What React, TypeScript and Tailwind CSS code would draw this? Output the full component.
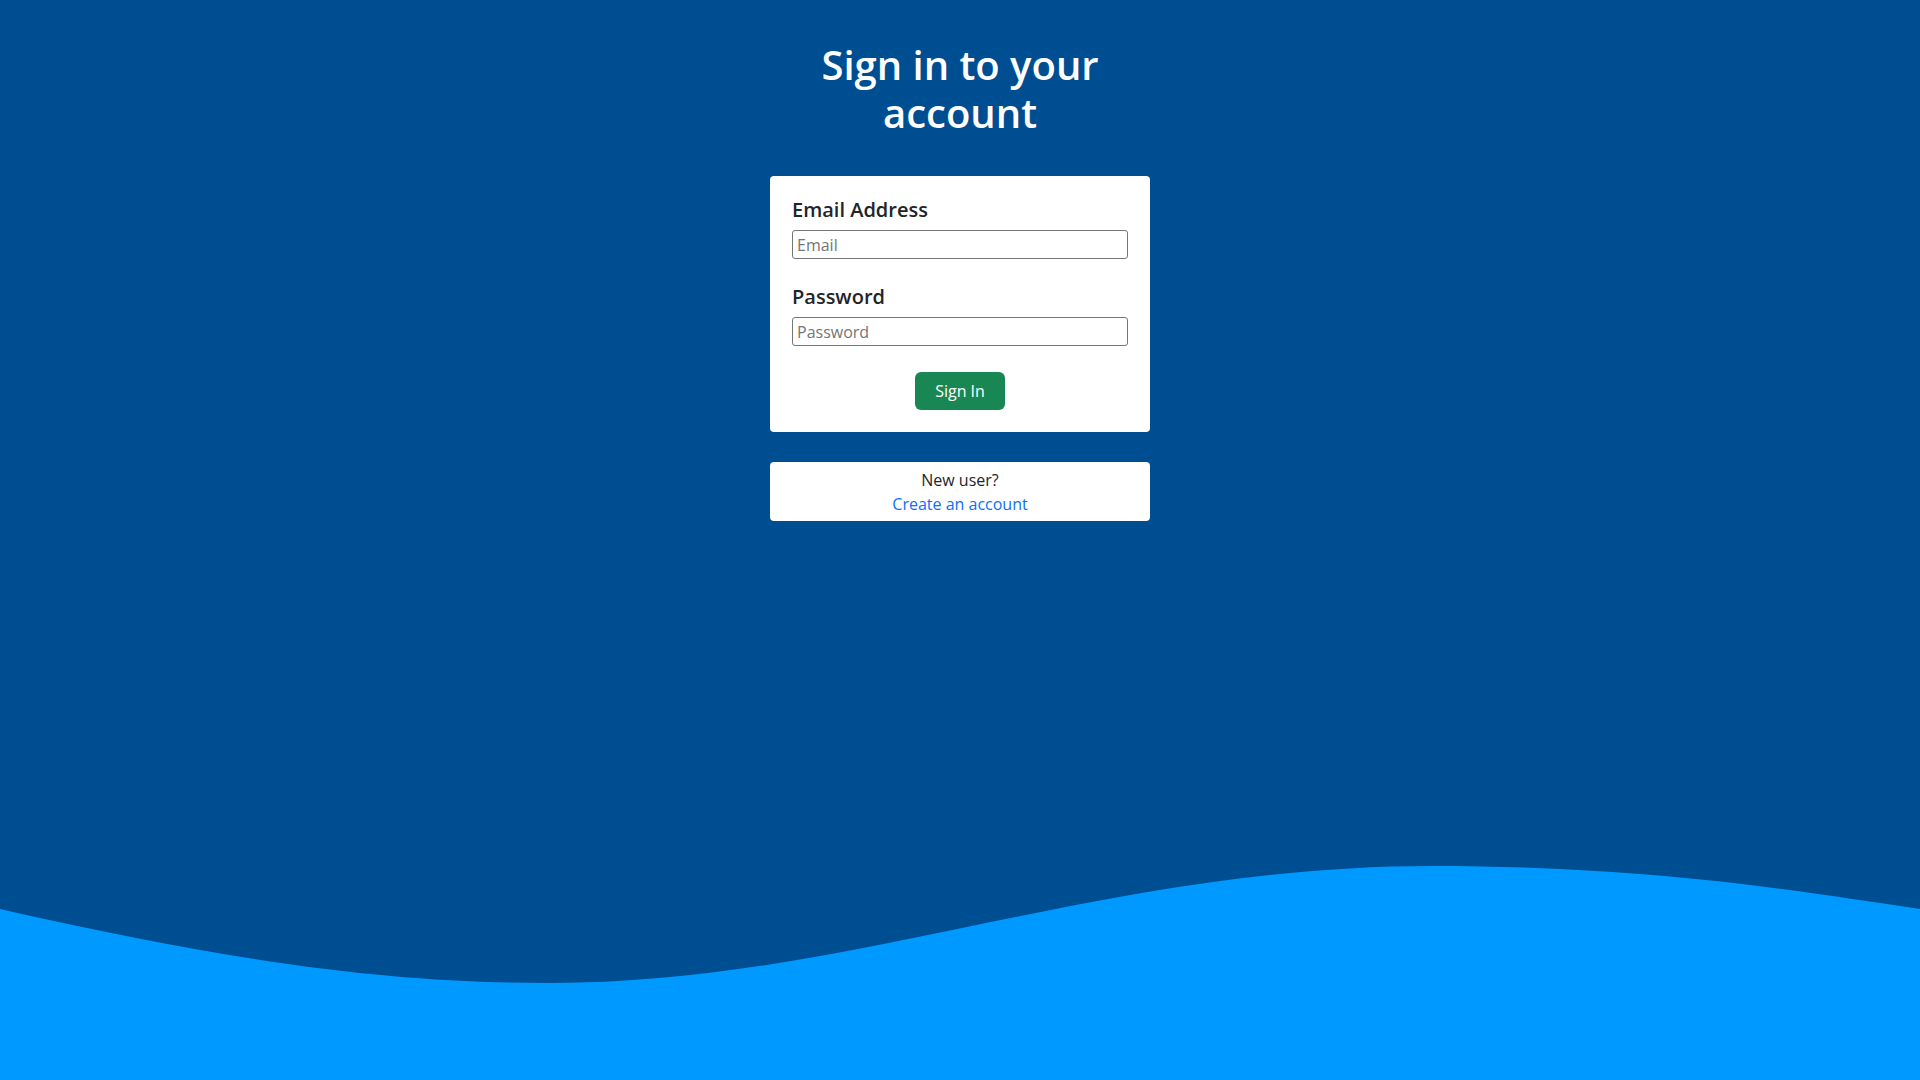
import React from "react";

function Wave() {
  return (
    <svg
      className="block w-full h-[214px]"
      viewBox="0 0 1920 214"
      preserveAspectRatio="none"
      xmlns="http://www.w3.org/2000/svg"
    >
      <path
        fill="#0099ff"
        d="M0,43 C250,100 400,117 551,117 C850,117 1100,0 1433,0 C1650,0 1800,25 1920,43 L1920,214 L0,214 Z"
      />
    </svg>
  );
}

export default function App() {
  return (
    <div className="h-screen w-full flex flex-col bg-[#004e92] font-['Open_Sans',sans-serif] overflow-hidden">
      <div className="flex flex-col items-center pt-[41px]">
        <h1 className="w-[380px] text-center text-white text-[40px] leading-[48px] font-semibold">
          Sign in to your account
        </h1>

        <form
          className="mt-[39px] w-[380px] bg-white rounded-[4px] p-[22px] flex flex-col"
          onSubmit={(e) => e.preventDefault()}
        >
          <label htmlFor="email" className="text-[20px] leading-[24px] font-semibold text-[#212529] mb-[8px]">
            Email Address
          </label>
          <input
            id="email"
            type="email"
            placeholder="Email"
            className="h-[29px] w-full border border-[#767676] rounded-[3px] px-[4px] text-[16px] text-[#212529] placeholder:text-[#757575] outline-none"
          />

          <label
            htmlFor="password"
            className="mt-[26px] text-[20px] leading-[24px] font-semibold text-[#212529] mb-[8px]"
          >
            Password
          </label>
          <input
            id="password"
            type="password"
            placeholder="Password"
            className="h-[29px] w-full border border-[#767676] rounded-[3px] px-[4px] text-[16px] text-[#212529] placeholder:text-[#757575] outline-none"
          />

          <div className="mt-[26px] flex justify-center">
            <button
              type="submit"
              className="w-[90px] h-[38px] rounded-md bg-[#198754] text-white text-[16px]"
            >
              Sign In
            </button>
          </div>
        </form>

        <div className="mt-[30px] w-[380px] bg-white rounded-[4px] pt-[6px] pb-[5px] text-center text-[16px] leading-[24px]">
          <p className="text-[#212529]">New user?</p>
          <a href="#" className="text-[#0d6efd]">
            Create an account
          </a>
        </div>
      </div>

      <div className="mt-auto">
        <Wave />
      </div>
    </div>
  );
}
